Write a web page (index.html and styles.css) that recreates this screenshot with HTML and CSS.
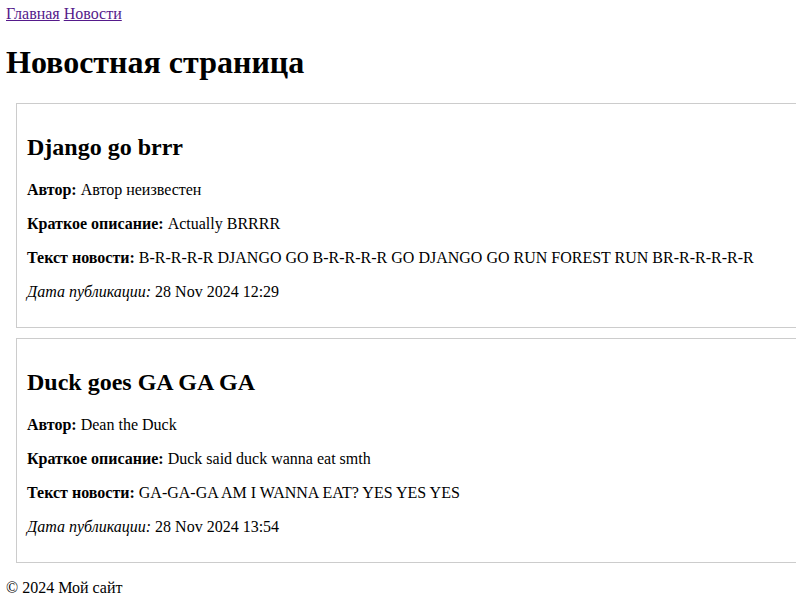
FILE: index.html
```html
<!DOCTYPE html>
<html lang="ru">
<head>
<meta charset="utf-8">
<title>Новости</title>
<link rel="stylesheet" href="styles.css">
</head>
<body>
<nav class="nav"><a href="#">Главная</a> <a href="#">Новости</a></nav>
<h1 class="title">Новостная страница</h1>
<div class="news-item">
  <h2>Django go brrr</h2>
  <p><strong>Автор:</strong> Автор неизвестен</p>
  <p><strong>Краткое описание:</strong> Actually BRRRR</p>
  <p><strong>Текст новости:</strong> B-R-R-R-R DJANGO GO B-R-R-R-R GO DJANGO GO RUN FOREST RUN BR-R-R-R-R-R</p>
  <p><em>Дата публикации:</em> 28 Nov 2024 12:29</p>
</div>
<div class="news-item">
  <h2>Duck goes GA GA GA</h2>
  <p><strong>Автор:</strong> Dean the Duck</p>
  <p><strong>Краткое описание:</strong> Duck said duck wanna eat smth</p>
  <p><strong>Текст новости:</strong> GA-GA-GA AM I WANNA EAT? YES YES YES</p>
  <p><em>Дата публикации:</em> 28 Nov 2024 13:54</p>
</div>
<footer class="footer">© 2024 Мой сайт</footer>
</body>
</html>
```
FILE: styles.css
```css
html {
  overflow: hidden;
}
body {
  margin: 5px 6px 8px 6px;
  font-family: "Liberation Serif", "Times New Roman", serif;
  font-size: 16px;
  color: #000;
}
.nav a {
  color: #551a8b;
}
.news-item {
  border: 1px solid #ccc;
  padding: 10px;
  margin: 10px;
  width: 110%;
}
.footer {
  margin: 16px 0;
}
```
